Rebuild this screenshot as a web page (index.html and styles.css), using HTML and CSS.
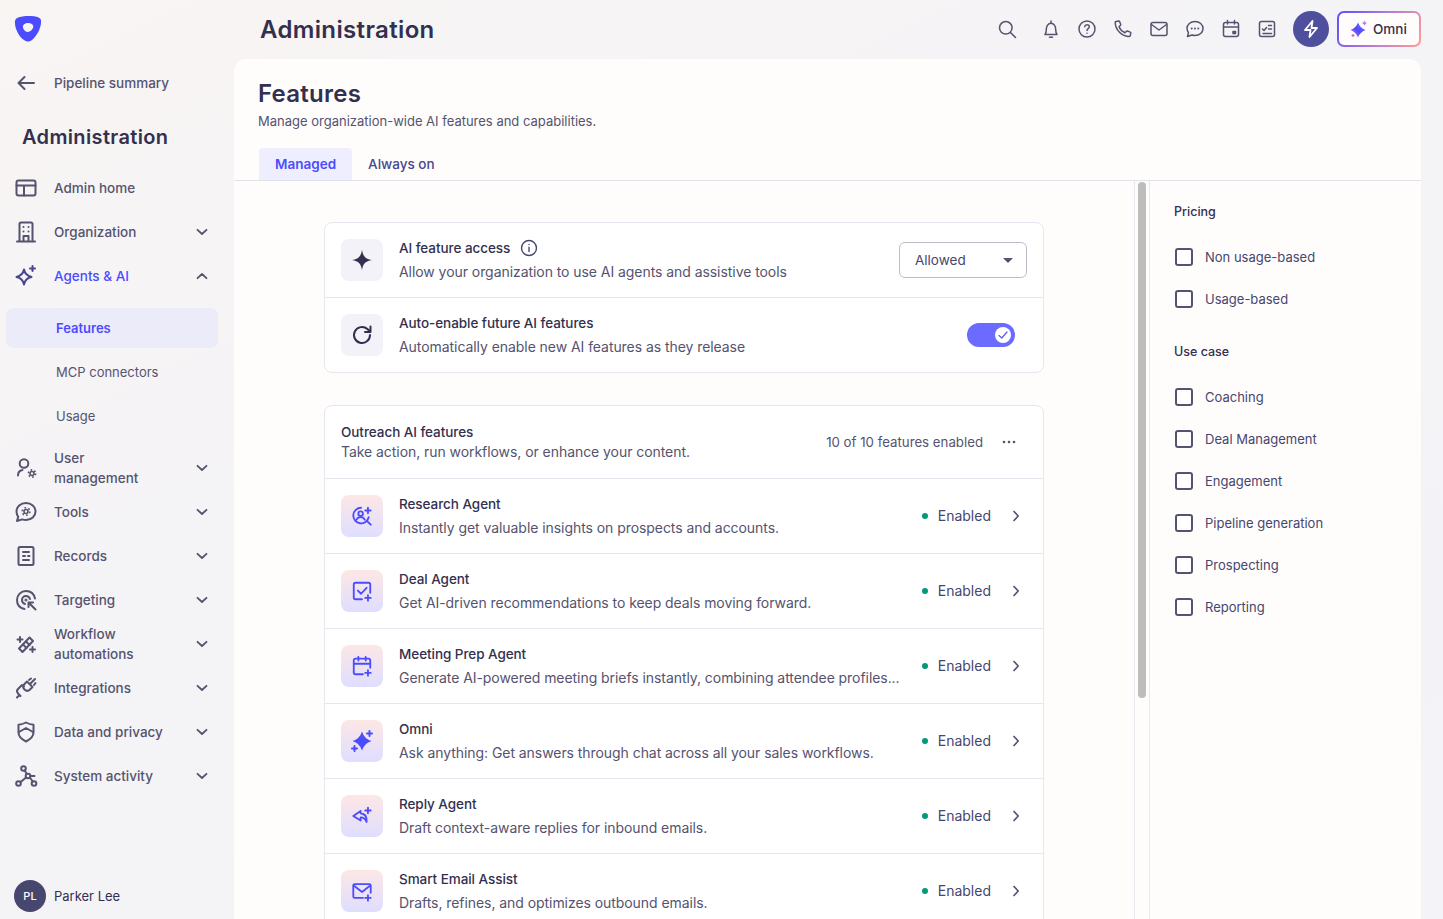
FILE: index.html
```html
<!DOCTYPE html>
<html lang="en">
  <head>
    <meta charset="UTF-8" />
    <meta name="viewport" content="width=device-width, initial-scale=1.0" />
    <title>Administration - Features</title>
    <link rel="stylesheet" href="styles.css">
  </head>
  <body>
    <svg class="defs" width="0" height="0" aria-hidden="true">
      <defs>
        <symbol id="chev-down" viewBox="0 0 12 12"><path d="M1.5 3.8 6 8l4.5-4.2" fill="none" stroke="currentColor" stroke-width="1.8" stroke-linecap="round" stroke-linejoin="round"/></symbol>
        <symbol id="chev-right" viewBox="0 0 12 12"><path d="M4 1.5 8.2 6 4 10.5" fill="none" stroke="currentColor" stroke-width="1.7" stroke-linecap="round" stroke-linejoin="round"/></symbol>
      </defs>
    </svg>

    <!--SIDEBAR-->
    <aside class="sidebar">
      <div class="logo">
        <svg width="28" height="26" viewBox="0 0 28 26"><path fill-rule="evenodd" fill="#4c4cff" d="M3.6 1.8C8.5-.3 19.5-.5 24.6 1.6c2 .8 2.6 2.3 2.5 4.4-.2 6.500-4.600 14.700-9.400 18.200-2.300 1.700-4.900 1.700-7.300.1C5.400 21 1 13.400.9 6.400.8 4.300 1.600 2.700 3.600 1.800Zm10.500 5.100c-3 0-5.200 1.700-5.200 3.900 0 2.500 2.500 5.100 4.700 5.100 2.500 0 5.700-3 5.700-5.500 0-2.200-2.200-3.500-5.200-3.500Z"/></svg>
      </div>
      <a class="back">
        <svg class="nav-icon" viewBox="0 0 24 24"><path d="M20 12H4.500M10.500 6l-6 6 6 6" /></svg>
        <span>Pipeline summary</span>
      </a>
      <h2 class="side-title">Administration</h2>
      <nav class="nav">
        <a class="nav-item">
          <svg class="nav-icon" viewBox="0 0 24 24"><rect x="2.500" y="4.500" width="19" height="15" rx="2"/><path d="M2.500 9.500h19M10 9.500v10"/></svg>
          <span class="nav-label">Admin home</span>
        </a>
        <a class="nav-item">
          <svg class="nav-icon" viewBox="0 0 24 24"><path d="M3 21.500h18M5.500 21.500V4a1.500 1.500 0 0 1 1.500-1.500h10A1.500 1.500 0 0 1 18.500 4v17.500M9.500 21.500V16h5v5.500M9.500 7h.01M14.500 7h.01M9.500 11.500h.01M14.500 11.500h.01"/></svg>
          <span class="nav-label">Organization</span>
          <svg class="chev"><use href="#chev-down"/></svg>
        </a>
        <a class="nav-item active">
          <svg class="nav-icon" viewBox="0 0 24 24"><path d="M10 5.500c.9 4.400 2.800 6.300 7.500 7.500-4.700 1-6.600 3-7.500 7.500C9.100 16 7.200 14 2.500 13c4.700-1.200 6.600-3.100 7.500-7.500Z"/><path d="M18.500 2v5M16 4.500h5"/></svg>
          <span class="nav-label">Agents &amp; AI</span>
          <svg class="chev flip"><use href="#chev-down"/></svg>
        </a>
        <div class="subnav">
          <a class="sub-item current">Features</a>
          <a class="sub-item">MCP connectors</a>
          <a class="sub-item">Usage</a>
        </div>
        <a class="nav-item">
          <svg class="nav-icon" viewBox="0 0 24 24"><circle cx="10" cy="7.500" r="4.300"/><path d="M4 19.500c0-3 1.800-5 4.500-5.500"/><g stroke-width="1.600"><circle cx="18" cy="17.500" r="2"/><circle cx="18" cy="17.500" r="3.600" stroke-dasharray="1.600 2.170" stroke-linecap="butt"/></g></svg>
          <span class="nav-label">User management</span>
          <svg class="chev"><use href="#chev-down"/></svg>
        </a>
        <a class="nav-item">
          <svg class="nav-icon" viewBox="0 0 24 24"><path d="M12 3c5.500 0 9.500 3.600 9.500 8.500S17.500 20 12 20c-1.300 0-2.600-.2-3.700-.6L3 21l1.200-4.300C3.100 15.300 2.500 13.500 2.500 11.500 2.500 6.600 6.500 3 12 3Z"/><g stroke-width="1.600"><circle cx="12" cy="11.500" r="2"/><circle cx="12" cy="11.500" r="3.800" stroke-dasharray="1.700 2.280" stroke-linecap="butt"/></g></svg>
          <span class="nav-label">Tools</span>
          <svg class="chev"><use href="#chev-down"/></svg>
        </a>
        <a class="nav-item">
          <svg class="nav-icon" viewBox="0 0 24 24"><rect x="4.500" y="3" width="15" height="18" rx="1.500"/><path d="M9 8h6M9 12h2M14 12h1.500M9 16h6"/></svg>
          <span class="nav-label">Records</span>
          <svg class="chev"><use href="#chev-down"/></svg>
        </a>
        <a class="nav-item">
          <svg class="nav-icon" viewBox="0 0 24 24"><path d="M21 10.500C20 6 16.500 3 12 3a9 9 0 0 0-9 9c0 4.500 3 8 7.500 9"/><path d="M16 11c-.6-1.800-2.200-3-4-3a4 4 0 0 0-4 4c0 1.800 1.200 3.400 3 4"/><circle cx="12" cy="12" r=".6"/><path d="M14.500 19v-4.500H19M15 15l6.500 6.500"/></svg>
          <span class="nav-label">Targeting</span>
          <svg class="chev"><use href="#chev-down"/></svg>
        </a>
        <a class="nav-item">
          <svg class="nav-icon" viewBox="0 0 24 24"><path d="m5 16.500 10.500-11 3.500 3.500L8.500 20Z"/><path d="m9 12.500 3.500 3.500M12 9.500l3.500 3.500"/><path d="M6 5v5M3.500 7.500h5M18.500 15v5M16 17.500h5"/></svg>
          <span class="nav-label">Workflow automations</span>
          <svg class="chev"><use href="#chev-down"/></svg>
        </a>
        <a class="nav-item">
          <svg class="nav-icon" viewBox="0 0 24 24"><path d="m13 5.500 5.500 5.500-2.500 2.500c-1.700 1.700-3.800 1.700-5.500 0s-1.700-3.800 0-5.500Z"/><path d="m16 8 5-5M15 4l2-1.500M20 9l1.500-2M10 10.500l-2-1.500-4 4c-1.200 1.200-1.200 3 0 4.500l2.500 2.500M3 21.500l2.500-2.500"/></svg>
          <span class="nav-label">Integrations</span>
          <svg class="chev"><use href="#chev-down"/></svg>
        </a>
        <a class="nav-item">
          <svg class="nav-icon" viewBox="0 0 24 24"><path d="M12 2.500c2.500 1.400 4.800 2 7.500 2.200v7.800c0 3.700-3 6.700-7.500 9-4.500-2.300-7.500-5.300-7.500-9V4.700C7.200 4.500 9.500 3.900 12 2.500Z"/><path d="m5 12 7-4 7 4"/></svg>
          <span class="nav-label">Data and privacy</span>
          <svg class="chev"><use href="#chev-down"/></svg>
        </a>
        <a class="nav-item">
          <svg class="nav-icon" viewBox="0 0 24 24"><circle cx="9.500" cy="4.500" r="2.300"/><circle cx="14" cy="12" r="2.300"/><circle cx="4.500" cy="19.500" r="2.300"/><circle cx="20" cy="19.500" r="2.300"/><path d="m10.700 6.500 2.100 3.500M12.100 13.500l-5.800 4.700M15.800 13.500l3 4M16.500 12h4"/></svg>
          <span class="nav-label">System activity</span>
          <svg class="chev"><use href="#chev-down"/></svg>
        </a>
      </nav>
      <div class="user">
        <span class="avatar">PL</span>
        <span class="user-name">Parker Lee</span>
      </div>
    </aside>

    <main class="main">
      <!--TOP BAR-->
      <header class="topbar">
        <h1 class="page-title">Administration</h1>
        <div class="top-actions">
          <svg class="top-icon search" viewBox="0 0 20 20"><circle cx="8.800" cy="8.800" r="6.300"/><path d="m13.500 13.500 5 5"/></svg>
          <svg class="top-icon" viewBox="0 0 20 20"><path d="M4 15.500c1-1.400 1.300-2.600 1.300-5 0-3.200 1.800-6.300 4.700-6.300s4.700 3.100 4.700 6.300c0 2.400.3 3.600 1.300 5ZM10 2v2M8.500 18.200h3"/></svg>
          <svg class="top-icon" viewBox="0 0 20 20"><circle cx="10" cy="10" r="8"/><path d="M7.700 7.700C7.900 6.500 8.800 5.800 10 5.800c1.300 0 2.300.8 2.300 2 0 1.900-2.300 1.900-2.300 3.800M10 14.300h.01"/></svg>
          <svg class="top-icon" viewBox="0 0 20 20"><path d="M3 2.500 5.800 2c.4 0 .7.200.8.500l1.100 3c.1.300 0 .6-.2.800L6 7.700c1 2.500 3.300 4.900 6 6l1.500-1.500c.2-.2.500-.3.800-.2l3 1.100c.3.100.5.400.5.800l-.5 2.800c-.1.500-.5.800-1 .8C8.800 17.300 2.300 10.800 2.200 3.500c0-.5.300-.9.800-1Z"/></svg>
          <svg class="top-icon" viewBox="0 0 20 20"><rect x="2" y="3.500" width="16" height="13" rx="2"/><path d="m2.500 5.500 7.500 5.500 7.500-5.500"/></svg>
          <svg class="top-icon" viewBox="0 0 20 20"><path d="M10 2.500c4.500 0 8 3 8 7s-3.500 7-8 7c-1 0-2-.2-2.900-.5L2.500 17.500l1-3.900C2.600 12.400 2 11 2 9.500c0-4 3.500-7 8-7Z"/><path d="M6.700 9.500h.01M10 9.500h.01M13.300 9.500h.01" stroke-width="2"/></svg>
          <svg class="top-icon" viewBox="0 0 20 20"><rect x="2.500" y="3.500" width="15" height="14" rx="2"/><path d="M2.500 8h15M6.500 1.500v3.500M13.500 1.500v3.500"/><path d="M12 12.500h2.500v2H12Z" fill="currentColor"/></svg>
          <svg class="top-icon" viewBox="0 0 20 20"><rect x="2.500" y="2.500" width="15" height="15" rx="2"/><path d="m5.500 10 1.500 1.500L9.500 8.500M11.500 6.500h3M11.500 10h3M6 14.500h8.500"/></svg>
          <span class="bolt">
            <svg width="20" height="20" viewBox="0 0 20 20"><path d="M11.500 2 4 11h5.500l-1 7L16 9h-5.500Z" fill="none" stroke="#fff" stroke-width="1.800" stroke-linejoin="round"/></svg>
          </span>
          <span class="omni-btn">
            <svg width="18" height="18" viewBox="0 0 18 18">
              <defs>
                <linearGradient id="omniGrad" x1="0" y1="1" x2="1" y2="0">
                  <stop offset="0" stop-color="#e878b8"/>
                  <stop offset=".42" stop-color="#4c4cff"/>
                  <stop offset=".68" stop-color="#6a5cff"/>
                  <stop offset="1" stop-color="#e3a0d0"/>
                </linearGradient>
              </defs>
              <path fill="url(#omniGrad)" d="M8 2.500Q10 8 15.500 10 10 12 8 17.500 6 12 .5 10 6 8 8 2.500ZM14.500 .5Q15 2.500 17 3 15 3.500 14.500 5.500 14 3.500 12 3 14 2.500 14.500 .5ZM3 13.500Q3.400 15.100 5 15.500 3.400 15.900 3 17.500 2.600 15.900 1 15.500 2.600 15.100 3 13.500Z"/>
            </svg>
            Omni
          </span>
        </div>
      </header>

      <section class="panel">
        <div class="panel-head">
          <h2 class="panel-title">Features</h2>
          <p class="panel-sub">Manage organization-wide AI features and capabilities.</p>
          <div class="tabs">
            <a class="tab selected">Managed</a>
            <a class="tab">Always on</a>
          </div>
        </div>

        <div class="panel-body">
          <div class="content">
            <!--ACCESS CARD-->
            <div class="card">
              <div class="row">
                <span class="tile">
                  <svg width="24" height="24" viewBox="0 0 24 24"><path fill="#33304f" d="M12 2c1.200 6.600 3.300 8.800 10 10-6.700 1.200-8.800 3.400-10 10-1.200-6.600-3.300-8.800-10-10 6.700-1.200 8.800-3.400 10-10Z"/></svg>
                </span>
                <div class="row-text">
                  <div class="row-title">AI feature access
                    <svg class="info" width="18" height="18" viewBox="0 0 18 18"><circle cx="9" cy="9" r="7.500"/><path d="M9 8.200v4.300M9 5.500h.01"/></svg>
                  </div>
                  <div class="row-desc">Allow your organization to use AI agents and assistive tools</div>
                </div>
                <div class="select">Allowed<span class="caret"></span></div>
              </div>
              <div class="row">
                <span class="tile">
                  <svg width="24" height="24" viewBox="0 0 24 24"><path d="M20 12a8 8 0 1 1-2.600-5.900L20.500 9M20.500 3.500V9H15" fill="none" stroke="#33304f" stroke-width="2" stroke-linecap="round" stroke-linejoin="round"/></svg>
                </span>
                <div class="row-text">
                  <div class="row-title">Auto-enable future AI features</div>
                  <div class="row-desc">Automatically enable new AI features as they release</div>
                </div>
                <span class="toggle">
                  <span class="knob">
                    <svg width="12" height="12" viewBox="0 0 12 12"><path d="m2 6.500 2.800 2.500L10 3" fill="none" stroke="#5f5ff5" stroke-width="1.300" stroke-linecap="round" stroke-linejoin="round"/></svg>
                  </span>
                </span>
              </div>
            </div>

            <!--AGENT LIST-->
            <div class="card">
              <div class="row list-head">
                <div class="row-text head-text">
                  <div class="row-title">Outreach AI features</div>
                  <div class="row-desc">Take action, run workflows, or enhance your content.</div>
                </div>
                <span class="count">10 of 10 features enabled</span>
                <svg class="more" width="14" height="14" viewBox="0 0 14 14"><circle cx="2" cy="7" r="1.300"/><circle cx="7" cy="7" r="1.300"/><circle cx="12" cy="7" r="1.300"/></svg>
              </div>

              <div class="row">
                <span class="tile agent">
                  <svg class="agent-icon" viewBox="0 0 24 24"><path d="M11 3a8.500 8.500 0 1 0 8.300 10.300M17 17l4.500 4.500"/><circle cx="10.500" cy="9.500" r="2.500"/><path d="M6 16c.8-1.800 2.500-2.800 4.500-2.800s3.700 1 4.500 2.800M18.500 3v6M15.500 6h6"/></svg>
                </span>
                <div class="row-text">
                  <div class="row-title">Research Agent</div>
                  <div class="row-desc">Instantly get valuable insights on prospects and accounts.</div>
                </div>
                <span class="status"><i class="dot"></i>Enabled</span>
                <svg class="go"><use href="#chev-right"/></svg>
              </div>

              <div class="row">
                <span class="tile agent">
                  <svg class="agent-icon" viewBox="0 0 24 24"><path d="M12 21H5a2 2 0 0 1-2-2V5a2 2 0 0 1 2-2h14a2 2 0 0 1 2 2v9"/><path d="m7.500 11.500 3.500 3.500 6-6.500M18.500 16.500v6M15.500 19.500h6"/></svg>
                </span>
                <div class="row-text">
                  <div class="row-title">Deal Agent</div>
                  <div class="row-desc">Get AI-driven recommendations to keep deals moving forward.</div>
                </div>
                <span class="status"><i class="dot"></i>Enabled</span>
                <svg class="go"><use href="#chev-right"/></svg>
              </div>

              <div class="row">
                <span class="tile agent">
                  <svg class="agent-icon" viewBox="0 0 24 24"><path d="M13 21H5a2 2 0 0 1-2-2V6a2 2 0 0 1 2-2h14a2 2 0 0 1 2 2v8M3 9.500h18M8 2v4M16 2v4"/><path d="M18.500 16.500v6M15.500 19.500h6"/></svg>
                </span>
                <div class="row-text">
                  <div class="row-title">Meeting Prep Agent</div>
                  <div class="row-desc">Generate AI-powered meeting briefs instantly, combining attendee profiles...</div>
                </div>
                <span class="status"><i class="dot"></i>Enabled</span>
                <svg class="go"><use href="#chev-right"/></svg>
              </div>

              <div class="row">
                <span class="tile agent">
                  <svg class="agent-icon solid" viewBox="0 0 24 24"><path d="M12 2.500Q14.200 9.800 21.500 12 14.200 14.200 12 21.500 9.800 14.200 2.500 12 9.800 9.800 12 2.500Z"/><path class="thin" d="M19.500 2v5M17 4.500h5M4.500 17v5M2 19.500h5"/></svg>
                </span>
                <div class="row-text">
                  <div class="row-title">Omni</div>
                  <div class="row-desc">Ask anything: Get answers through chat across all your sales workflows.</div>
                </div>
                <span class="status"><i class="dot"></i>Enabled</span>
                <svg class="go"><use href="#chev-right"/></svg>
              </div>

              <div class="row">
                <span class="tile agent">
                  <svg class="agent-icon" viewBox="0 0 24 24"><path d="M10.500 6.500 2.500 12l8 5v-3.500c3 0 5 1 6.500 5 .5-5.500-1.500-9-6.500-9.500Z"/><path d="M18.500 3v6M15.500 6h6"/></svg>
                </span>
                <div class="row-text">
                  <div class="row-title">Reply Agent</div>
                  <div class="row-desc">Draft context-aware replies for inbound emails.</div>
                </div>
                <span class="status"><i class="dot"></i>Enabled</span>
                <svg class="go"><use href="#chev-right"/></svg>
              </div>

              <div class="row">
                <span class="tile agent">
                  <svg class="agent-icon" viewBox="0 0 24 24"><path d="M13 19.500H4a1.500 1.500 0 0 1-1.500-1.500V6A1.500 1.500 0 0 1 4 4.500h16A1.500 1.500 0 0 1 21.500 6v8"/><path d="m3 6 9 7 9-7M18.500 16.500v6M15.500 19.500h6"/></svg>
                </span>
                <div class="row-text">
                  <div class="row-title">Smart Email Assist</div>
                  <div class="row-desc">Drafts, refines, and optimizes outbound emails.</div>
                </div>
                <span class="status"><i class="dot"></i>Enabled</span>
                <svg class="go"><use href="#chev-right"/></svg>
              </div>
            </div>
          </div>

          <div class="scrollbar"><div class="thumb"></div></div>

          <!--FILTERS-->
          <aside class="filters">
            <h3 class="filter-title">Pricing</h3>
            <label class="check"><span class="box"></span>Non usage-based</label>
            <label class="check"><span class="box"></span>Usage-based</label>
            <h3 class="filter-title second">Use case</h3>
            <label class="check"><span class="box"></span>Coaching</label>
            <label class="check"><span class="box"></span>Deal Management</label>
            <label class="check"><span class="box"></span>Engagement</label>
            <label class="check"><span class="box"></span>Pipeline generation</label>
            <label class="check"><span class="box"></span>Prospecting</label>
            <label class="check"><span class="box"></span>Reporting</label>
          </aside>
        </div>
      </section>
    </main>
  </body>
</html>
```

FILE: styles.css
```css
* {
  box-sizing: border-box;
}
html,
body {
  height: 100%;
}
body {
  margin: 0;
  display: flex;
  height: 919px;
  overflow: hidden;
  font-family: Inter, "Noto Sans", sans-serif;
  font-size: 14px;
  color: #33304f;
  background: linear-gradient(155deg, #f8f5f3 0%, #f4f3f6 45%, #f3f3f8 100%);
}
.defs {
  position: absolute;
}
a {
  color: inherit;
  text-decoration: none;
}
h1,
h2,
h3,
p {
  margin: 0;
}

/* sidebar */
.sidebar {
  flex: 0 0 234px;
  display: flex;
  flex-direction: column;
  padding: 0 16px 7px 6px;
  color: #55536f;
}
.logo {
  height: 59px;
  padding: 16px 0 0 8px;
}
.back {
  display: flex;
  align-items: center;
  gap: 16px;
  height: 48px;
  padding-left: 8px;
  font-size: 13.5px;
  font-weight: 500;
}
.nav-icon {
  flex: 0 0 24px;
  width: 24px;
  height: 24px;
  fill: none;
  stroke: currentColor;
  stroke-width: 2;
  stroke-linecap: round;
  stroke-linejoin: round;
}
.side-title {
  height: 59px;
  padding-left: 16px;
  font-size: 20px;
  font-weight: 600;
  line-height: 60px;
  letter-spacing: 0.35px;
  color: #33304f;
}
.nav {
  display: flex;
  flex-direction: column;
}
.nav-item {
  display: flex;
  align-items: center;
  gap: 16px;
  height: 44px;
  padding: 0 10px 0 8px;
  font-size: 13.5px;
  font-weight: 500;
  line-height: 20px;
}
.nav-label {
  flex: 1;
  max-width: 112px;
}
.chev {
  width: 12px;
  height: 12px;
  margin-left: auto;
}
.flip {
  transform: rotate(180deg);
}
.active {
  color: #4c4cff;
}
.active .nav-icon {
  color: #47468f;
}
.active .chev {
  color: #55536f;
}
.subnav {
  display: flex;
  flex-direction: column;
  gap: 4px;
  padding: 10px 0;
}
.sub-item {
  display: flex;
  align-items: center;
  height: 40px;
  padding-left: 50px;
  border-radius: 8px;
  font-size: 13px;
}
.current {
  background: #ebebfa;
  color: #4c4cff;
  font-weight: 600;
}
.user {
  display: flex;
  align-items: center;
  gap: 8px;
  margin-top: auto;
  padding-left: 8px;
}
.avatar {
  display: flex;
  align-items: center;
  justify-content: center;
  width: 32px;
  height: 32px;
  border-radius: 50%;
  background: #47466f;
  color: #fff;
  font-size: 11px;
  font-weight: 500;
}
.user-name {
  font-size: 13px;
  color: #33304f;
}

/* top bar */
.main {
  flex: 1;
  display: flex;
  flex-direction: column;
  min-width: 0;
  padding-right: 22px;
}
.topbar {
  flex: 0 0 59px;
  display: flex;
  align-items: center;
  justify-content: space-between;
  padding: 0 0 1px 26px;
}
.page-title {
  font-size: 24px;
  font-weight: 600;
  letter-spacing: 0.35px;
}
.top-actions {
  display: flex;
  align-items: center;
  gap: 16px;
}
.top-icon {
  width: 20px;
  height: 20px;
  fill: none;
  stroke: #55536f;
  stroke-width: 1.500;
  stroke-linecap: round;
  stroke-linejoin: round;
  color: #55536f;
}
.search {
  margin-right: 8px;
}
.bolt {
  display: flex;
  align-items: center;
  justify-content: center;
  width: 36px;
  height: 36px;
  border-radius: 50%;
  background: #4f4f9e;
}
.omni-btn {
  display: flex;
  align-items: center;
  gap: 5px;
  height: 36px;
  width: 84px;
  margin-left: -8px;
  padding-left: 11px;
  border: 2px solid transparent;
  border-radius: 7px;
  background: linear-gradient(#fefdfc, #fefdfc) padding-box,
    linear-gradient(120deg, #5b4dff 0%, #b27ad8 50%, #ff9f92 100%) border-box;
  font-size: 13.5px;
  font-weight: 500;
}

/* panel */
.panel {
  flex: 1;
  display: flex;
  flex-direction: column;
  min-height: 0;
  border-radius: 12px 12px 0 0;
  background: #fefdfc;
}
.panel-head {
  flex: 0 0 122px;
  padding: 21px 0 0 24px;
  border-bottom: 1px solid #e2e2ea;
}
.panel-title {
  font-size: 24px;
  font-weight: 600;
  line-height: 28px;
  letter-spacing: 0.25px;
}
.panel-sub {
  margin-top: 3px;
  font-size: 13px;
  line-height: 20px;
  color: #55536f;
}
.tabs {
  display: flex;
  margin: 17px 0 0 1px;
}
.tab {
  display: flex;
  align-items: center;
  height: 32px;
  padding: 0 16px;
  border-radius: 4px 4px 0 0;
  color: #47468f;
  font-size: 13.5px;
  font-weight: 500;
}
.selected {
  background: #eeeeff;
  color: #4c4cff;
  font-weight: 600;
}
.panel-body {
  flex: 1;
  display: flex;
  min-height: 0;
}
.content {
  flex: 1;
  display: flex;
  flex-direction: column;
  gap: 32px;
  min-width: 0;
  padding: 41px 90px 0;
  overflow: hidden;
}
.card {
  flex: none;
  width: 720px;
  border: 1px solid #e6e6ef;
  border-radius: 8px;
  background: #fff;
}
.row {
  display: flex;
  align-items: center;
  gap: 16px;
  height: 75px;
  padding: 0 16px;
  border-top: 1px solid #e6e6ef;
}
.row:first-child {
  height: 74px;
  border-top: 0;
}
.row.list-head {
  height: 72px;
  gap: 19px;
}
.tile {
  flex: 0 0 42px;
  display: flex;
  align-items: center;
  justify-content: center;
  height: 42px;
  border-radius: 8px;
  background: #f3f2f9;
}
.agent {
  background: linear-gradient(#fde7e5, #dfdeff);
}
.agent-icon {
  width: 22px;
  height: 22px;
  fill: none;
  stroke: #4c4cff;
  stroke-width: 2;
  stroke-linecap: round;
  stroke-linejoin: round;
}
.agent-icon.solid {
  width: 24px;
  height: 24px;
  fill: #4c4cff;
  stroke-width: 0;
}
.agent-icon .thin {
  stroke-width: 2;
}
.row-text {
  flex: 1;
  min-width: 0;
  line-height: 24px;
  letter-spacing: -0.06px;
}
.row-title {
  display: flex;
  align-items: center;
  font-size: 13.5px;
  font-weight: 500;
  color: #33304f;
}
.row-desc {
  color: #55536f;
}
.info {
  margin-left: 10px;
  fill: none;
  stroke: #47466f;
  stroke-width: 1.400;
  stroke-linecap: round;
}
.select {
  position: relative;
  flex: 0 0 128px;
  height: 36px;
  padding-left: 15px;
  border: 1px solid #bcbcc8;
  border-radius: 6px;
  font-size: 13.5px;
  line-height: 34px;
  color: #47466f;
}
.caret {
  position: absolute;
  top: 15px;
  right: 13px;
  border-top: 5px solid #55536f;
  border-left: 5px solid transparent;
  border-right: 5px solid transparent;
}
.toggle {
  display: flex;
  align-items: center;
  justify-content: flex-end;
  width: 48px;
  height: 24px;
  margin-right: 12px;
  padding-right: 4px;
  border-radius: 12px;
  background: #6b6bff;
}
.knob {
  display: flex;
  align-items: center;
  justify-content: center;
  width: 16px;
  height: 16px;
  border-radius: 50%;
  background: #fff;
}
.head-text {
  line-height: 20px;
}
.count {
  font-size: 13.25px;
  color: #55536f;
}
.more {
  margin-right: 11px;
  fill: #55536f;
}
.status {
  display: flex;
  align-items: center;
  gap: 10px;
  padding-bottom: 2px;
  color: #47466f;
}
.dot {
  width: 6px;
  height: 6px;
  margin-top: 1px;
  border-radius: 50%;
  background: #00997a;
}
.go {
  flex: none;
  width: 12px;
  height: 12px;
  margin: 0 5px 0 3px;
  color: #55536f;
}

/* scrollbar + filters */
.scrollbar {
  flex: 0 0 16px;
  padding: 1px 3px 0;
  border-left: 1px solid #e8e8ee;
  border-right: 1px solid #e8e8ee;
}
.thumb {
  width: 8px;
  height: 516px;
  background: #bdbdbd;
  border-radius: 4px;
}
.filters {
  flex: 0 0 271px;
  padding: 21px 0 0 24px;
}
.filter-title {
  margin-bottom: 14px;
  font-size: 12.500px;
  font-weight: 500;
  line-height: 20px;
}
.second {
  margin-top: 22px;
}
.check {
  display: flex;
  align-items: center;
  gap: 12px;
  height: 42px;
  color: #47466f;
  font-size: 13px;
}
.box {
  width: 18px;
  height: 18px;
  margin-left: 1px;
  border: 2px solid #55536f;
  border-radius: 3px;
  background: #fff;
}
```
